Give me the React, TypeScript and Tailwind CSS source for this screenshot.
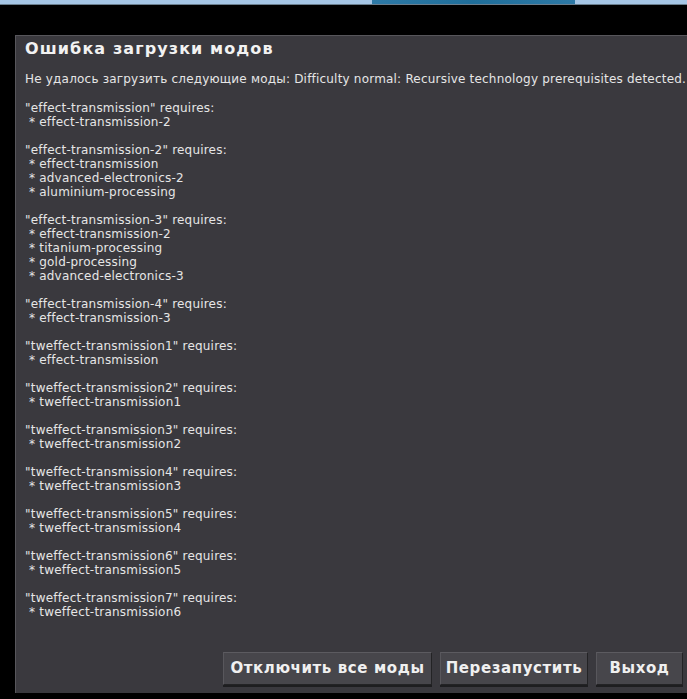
import React from "react";

const groups: Array<{ name: string; deps: string[] }> = [
  { name: "effect-transmission", deps: ["effect-transmission-2"] },
  {
    name: "effect-transmission-2",
    deps: ["effect-transmission", "advanced-electronics-2", "aluminium-processing"],
  },
  {
    name: "effect-transmission-3",
    deps: ["effect-transmission-2", "titanium-processing", "gold-processing", "advanced-electronics-3"],
  },
  { name: "effect-transmission-4", deps: ["effect-transmission-3"] },
  { name: "tweffect-transmission1", deps: ["effect-transmission"] },
  { name: "tweffect-transmission2", deps: ["tweffect-transmission1"] },
  { name: "tweffect-transmission3", deps: ["tweffect-transmission2"] },
  { name: "tweffect-transmission4", deps: ["tweffect-transmission3"] },
  { name: "tweffect-transmission5", deps: ["tweffect-transmission4"] },
  { name: "tweffect-transmission6", deps: ["tweffect-transmission5"] },
  { name: "tweffect-transmission7", deps: ["tweffect-transmission6"] },
];

// label + fixed width of each button, as in the game dialog
const buttons: Array<[string, string]> = [
  ["Отключить все моды", "w-[209px]"],
  ["Перезапустить", "w-[148px]"],
  ["Выход", "w-[87px]"],
];

export default function App() {
  return (
    <div className="w-[687px] h-[699px] bg-black overflow-hidden flex flex-col font-['DejaVu_Sans',sans-serif]">
      <div className="h-[4px] flex bg-[#a6c6e6]">
        <div className="ml-[372px] w-[203px] bg-gradient-to-r from-[#2d79a6] via-[#1f6e9a] to-[#2d79a6]" />
      </div>
      <div className="h-[1px] bg-[#6b7f8f]" />
      <div className="mt-[30px] ml-[15px] h-[658px] w-[700px] bg-[#3a393e] border-l border-t border-[#57565b] flex flex-col">
        <div className="pl-[9px] pt-[3px] text-[16px] font-bold tracking-[1.1px] text-[#f2f2f2] leading-[20px]">
          Ошибка загрузки модов
        </div>
        <div className="pl-[9px] mt-[13px] text-[12px] leading-[14px] text-[#e6e6e6] whitespace-pre tracking-[0.2px] flex flex-col">
          <div className="mb-[1px]">Не удалось загрузить следующие моды: Difficulty normal: Recursive technology prerequisites detected.</div>
          {groups.map((g) => (
            <div key={g.name} className="mt-[14px] flex flex-col">
              <div>"{g.name}" requires:</div>
              {g.deps.map((d) => (
                <div key={d}> * {d}</div>
              ))}
            </div>
          ))}
        </div>
        <div className="mt-auto mb-[8px] flex gap-[8px] pl-[207px]">
          {buttons.map(([label, w]) => (
            <div
              key={label}
              className={`${w} h-[33px] flex items-center justify-center bg-[#47464b] border border-[#232325] border-t-[#5c5b60] border-l-[#58575c] shadow-[0_2px_0_#1e1e20] text-[15px] font-bold text-[#f0f0f0] tracking-[0.6px]`}
            >
              {label}
            </div>
          ))}
        </div>
      </div>
    </div>
  );
}
